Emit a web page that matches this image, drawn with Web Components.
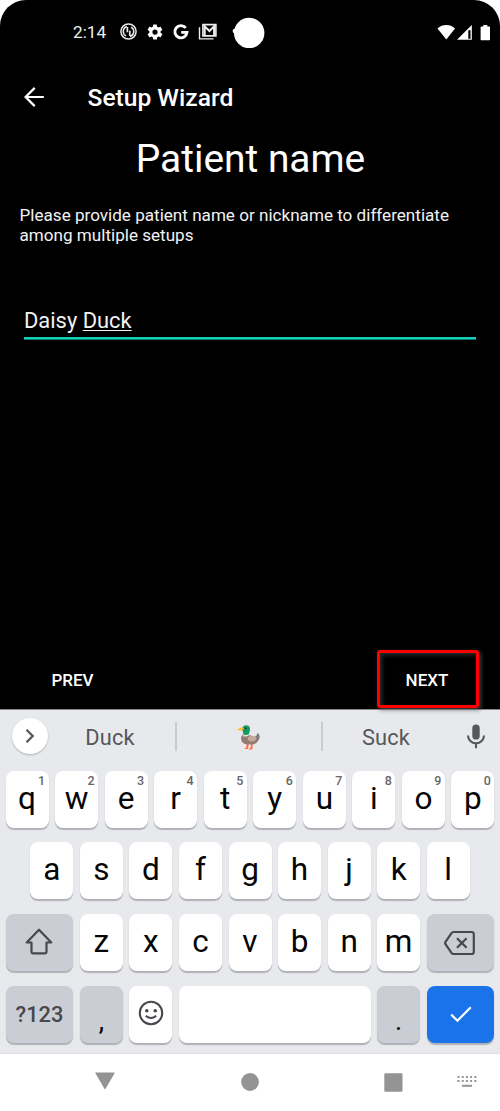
<!DOCTYPE html>
<html lang="en">
<head>
<meta charset="utf-8">
<title>Setup Wizard</title>
<style>
html,body{margin:0;background:#fff}
body{width:500px;height:1111px;overflow:hidden;font-family:Roboto,"Liberation Sans",sans-serif}
</style>
</head>
<body>
<phone-screen>
  <status-bar time="2:14"></status-bar>
  <app-bar>Setup Wizard</app-bar>
  <wizard-page>
    <span slot="title">Patient name</span>
    <span slot="hint">Please provide patient name or nickname to differentiate among multiple setups</span>
    <text-field>Daisy <u slot="composing">Duck</u></text-field>
  </wizard-page>
  <wizard-footer>
    <wizard-button>PREV</wizard-button>
    <wizard-button marked>NEXT</wizard-button>
  </wizard-footer>
  <soft-keyboard slot="bottom"></soft-keyboard>
  <nav-bar slot="bottom"></nav-bar>
</phone-screen>
<script>
function define(name, html, setup) {
  const template = document.createElement('template');
  template.innerHTML = html;
  customElements.define(name, class extends HTMLElement {
    constructor() {
      super();
      this.attachShadow({mode: 'open'}).append(template.content.cloneNode(true));
    }
    connectedCallback() { if (setup) setup(this, this.shadowRoot); }
  });
}

define('phone-screen', `<style>
:host{display:flex;flex-direction:column;width:500px;height:1111px}
.app{height:709px;background:#000;color:#fff;border-radius:26px 26px 0 0;display:flex;flex-direction:column;flex:none;position:relative;z-index:1}
</style><div class="app"><slot></slot></div><slot name="bottom"></slot>`);

define('status-bar', `<style>
:host{display:flex;align-items:center;height:64px;padding:0 9px 1px 73px;box-sizing:border-box}
time{font-size:17.2px;width:46.500px;line-height:20px;color:#eee}
svg{display:block;flex:none}
.left{display:flex;align-items:center;flex:1}
.right{display:flex;align-items:center}
</style>
<div class="left"><time></time>
<svg width="17" height="17" viewBox="0 0 17 17" fill="none" stroke="#e8e8e8" style="margin-right:9.500px"><circle cx="8.5" cy="8.5" r="7.6" stroke-width="1.5"/><path d="M7 3.600a5 5 0 0 0-1 9.300M10 13.400a5 5 0 0 0 1-9.300" stroke-width="1.500"/><path d="M7.400 4v5.200M9.800 7.800V13" stroke-width="1.700"/></svg>
<svg width="18" height="18" viewBox="0 0 24 24" fill="#fff" style="margin-right:8px"><path fill-rule="evenodd" d="M19.400 13c0-.3.1-.7.1-1s0-.7-.1-1l2.100-1.700c.2-.1.2-.4.1-.6l-2-3.500c-.1-.2-.4-.3-.6-.2l-2.500 1c-.5-.4-1.100-.7-1.700-1l-.4-2.600A.5.5 0 0 0 14 2h-4c-.2 0-.5.2-.5.4L9.100 5c-.6.3-1.200.6-1.700 1L4.900 5c-.2-.1-.5 0-.6.2l-2 3.500c-.1.2-.1.5.1.6L4.500 11c0 .3-.1.700-.1 1s0 .7.1 1l-2.100 1.700c-.2.1-.2.4-.1.6l2 3.500c.1.2.4.3.6.2l2.500-1c.5.4 1.100.7 1.700 1l.4 2.600c0 .2.2.4.5.4h4c.2 0 .5-.2.5-.4l.4-2.600c.6-.3 1.200-.6 1.700-1l2.500 1c.2.1.5 0 .6-.2l2-3.500c.1-.2.1-.5-.1-.6zM12 15.500a3.500 3.500 0 1 1 0-7 3.500 3.500 0 0 1 0 7z"/></svg>
<svg width="18" height="18" viewBox="0 0 18 18" fill="none" stroke="#fff" stroke-width="2.900" style="margin-right:8px"><path d="M13.700 4.900A6.100 6.100 0 1 0 15 9.400H9.200"/></svg>
<svg width="19" height="18" viewBox="0 0 19 18" fill="none" stroke="#eee" style="margin-right:15px"><path d="M1.500 4.200V15.900H15.500" stroke-width="1.400"/><path d="M4.900 1.600h13v11.300h-13z" stroke-width="1.600"/><path d="M6.700 12.500V3.300l4.700 4.700 4.700-4.700v9.200" stroke-width="2"/></svg>
<svg width="33" height="32" viewBox="0 0 33 32" fill="#fff"><circle cx="17.200" cy="17" r="15.200"/><circle cx="2.800" cy="15" r="2.200"/></svg>
</div>
<div class="right">
<svg width="57" height="20" viewBox="0 0 57 20" fill="#fff"><path d="M3.500 6.500a13 13 0 0 1 17.500 0L12.300 17.500z"/><path d="M23 17.800L37.800 3v14.800z" fill="#fff"/><path d="M34.300 8.200h2.200v8.600h-2.200z" fill="#000"/><path d="M47.300 4.500h2V3h4v1.500h2q.7 0 .7.7v12.400q0 .7-.7.7h-8q-.7 0-.7-.7V5.200q0-.7.7-.7z"/></svg>
</div>`, (el, root) => { root.querySelector('time').textContent = el.getAttribute('time'); });

define('app-bar', `<style>
:host{display:flex;align-items:center;height:66px;padding-left:24px;font-size:24.600px;font-weight:500;line-height:28px;padding-top:2px;box-sizing:border-box}
svg{margin:-2px 42.500px 0 0;flex:none}
</style><svg width="21" height="20" viewBox="0 0 21 20" fill="none" stroke="#fff" stroke-width="2.200"><path d="M19.800 10H2M10.700 .9L1.600 10l9.100 9.100"/></svg><div><slot></slot></div>`);

define('wizard-page', `<style>
:host{display:flex;flex-direction:column;flex:1}
.title{font-size:38.900px;line-height:46px;text-align:center;margin-top:6px;padding-left:1px}
.hint{font-size:17.100px;line-height:20px;margin:23px 20px 0 19.500px;color:#f2f2f2}
.field{margin:62px 24px 0}
</style><div class="title"><slot name="title"></slot></div><div class="hint"><slot name="hint"></slot></div><div class="field"><slot></slot></div>`);

define('text-field', `<style>
:host{display:block;font-size:21.900px;line-height:28px;color:#f2f2f2;border-bottom:2px solid #12cdb8;box-shadow:0 1px 0 #087f72;padding-bottom:2px;white-space:pre}
::slotted(u){text-decoration-thickness:1px;text-underline-offset:2px}
</style><slot></slot><slot name="composing"></slot>`);

define('wizard-footer', `<style>
:host{display:flex;justify-content:space-between;align-items:center;height:60px;padding:0 21px 0 21.500px}
</style><slot></slot>`);

define('wizard-button', `<style>
:host{display:flex;align-items:center;justify-content:center;box-sizing:border-box;width:102px;height:58px;font-size:17px;font-weight:500;padding-top:2px}
:host([marked]){border:3px solid #f00;padding:2px 2px 0 0;border-radius:3px;box-shadow:2px 2px 4px rgba(90,90,90,.7),inset 2px 2px 4px rgba(90,90,90,.5)}
</style><slot></slot>`);

define('key-cap', `<style>
:host{display:flex;position:relative;align-items:center;justify-content:center;box-sizing:border-box;width:43px;height:57px;flex:none;border-radius:8px;background:#fff;box-shadow:0 1.200px 1px rgba(0,0,0,.24);color:#050505;font-size:31.500px;line-height:38px;padding-bottom:1.200px}
:host([wide]){width:67.800px}
:host([space]){width:auto;flex:1}
:host([tone=gray]){background:#cbcdd5}
:host([tone=blue]){background:#1a73e8}
:host([label]){font-size:21.800px;font-weight:500;color:#46484c;padding:1px 0 0}
:host([low]){padding-top:14px;padding-bottom:0;font-size:27px}
sup{position:absolute;top:2px;right:3.500px;font-size:12.500px;line-height:15px;font-weight:500;color:#666}
sup:empty{display:none}
</style><slot></slot><sup></sup>`, (el, root) => { root.querySelector('sup').textContent = el.getAttribute('alt') || ''; });

define('key-row', `<style>:host{display:flex;justify-content:center;gap:6.550px;height:57px;padding:0 5.600px}</style><slot></slot>`);

define('suggestion-strip', `<style>
:host{display:grid;grid-template-columns:48px 127px 1px 145px 1px 1fr 37px;align-items:center;height:54px;color:#55575b;font-size:21.800px;letter-spacing:.2px}
.more{width:36px;height:36px;border-radius:50%;background:#fff;box-shadow:0 1px 2px rgba(0,0,0,.25);display:flex;align-items:center;justify-content:center;margin-left:12px;margin-top:-2px}
.word{text-align:center}
i{height:29px;background:#c9cbd0;width:1.500px;margin-top:-2px}
svg{display:block}
.duck{margin:auto}
</style>
<div class="more"><svg width="12" height="16" viewBox="0 0 12 16" fill="none" stroke="#55575b" stroke-width="2.300"><path d="M2.500 1.800L8.700 8l-6.200 6.200"/></svg></div>
<div class="word" style="padding-right:3px">Duck</div><i></i>
<div><svg class="duck" width="24" height="27" viewBox="0 0 24 27">
<path d="M9.500 20l-.3 3.500-2 1.500h4l.4-5zM14 20l-.2 3-2 2.500h3.600l.3-5.500z" fill="#ff7043"/>
<path d="M18 12.500q2.500-1.200 2.500-3.700 2.200 1.400 2.200 4-.2 4.500-4.700 5z" fill="#758087"/>
<path d="M7 10q-3.200 1.500-2.900 5.200.4 5 6.900 5.200h3.500q7-.2 7-7-2.500 1-5-1.200-4.500-1.200-9.500-2.200z" fill="#967a72"/>
<path d="M10.500 13.200q4-2.200 8.500-.2 1 4.300-4 4.500-4.200 0-4.500-4.300z" fill="#c5a99d"/>
<path d="M6.300 10.500l4.800-1 .7 2.200q-3 1.200-5.700.5z" fill="#e4e8e8"/>
<path d="M6.200 2.500q2-2.100 4.700-.9 2.600 1.300 2 4.700l-1 4q-3 1.300-5.300.2L5 5z" fill="#159a62"/>
<path d="M.5 5Q3.500 4.500 5 2.700l2 2q-.6 2.200-5.500 1.700Q.4 6 .5 5z" fill="#fbc02d"/><circle cx="8.500" cy="4.300" r="1" fill="#224039"/></svg></div><i></i>
<div class="word" style="padding-right:13px">Suck</div>
<svg width="20" height="25" viewBox="0 0 20 25" fill="none" stroke="#55575b" style="margin:-2px 0 0 2.500px"><rect x="6.300" y=".6" width="7.400" height="15" rx="3.700" fill="#55575b" stroke="none"/><path d="M2 11.400a8 8 0 0 0 16 0M10 19.400V24.200" stroke-width="2.100"/></svg>`);

define('soft-keyboard', `<style>
:host{display:block;box-sizing:border-box;height:345px;background:#e8e9ed;border-top:1px solid #87888b;border-bottom:1px solid #dfe0e3}
.rows{display:flex;flex-direction:column;gap:14.600px;padding-top:6.800px}
svg{display:block}
</style>
<suggestion-strip></suggestion-strip>
<div class="rows">
<key-row><key-cap alt="1">q</key-cap><key-cap alt="2">w</key-cap><key-cap alt="3">e</key-cap><key-cap alt="4">r</key-cap><key-cap alt="5">t</key-cap><key-cap alt="6">y</key-cap><key-cap alt="7">u</key-cap><key-cap alt="8">i</key-cap><key-cap alt="9">o</key-cap><key-cap alt="0">p</key-cap></key-row>
<key-row><key-cap>a</key-cap><key-cap>s</key-cap><key-cap>d</key-cap><key-cap>f</key-cap><key-cap>g</key-cap><key-cap>h</key-cap><key-cap>j</key-cap><key-cap>k</key-cap><key-cap>l</key-cap></key-row>
<key-row><key-cap wide tone="gray"><svg width="28" height="27" viewBox="0 0 28 27" fill="none" stroke="#46484c" stroke-width="2.200" stroke-linejoin="round"><path d="M14 1.700L1.700 14.500h4.800V24q0 1.300 1.300 1.300h12.400q1.300 0 1.300-1.300v-9.500h4.800z"/></svg></key-cap><key-cap>z</key-cap><key-cap>x</key-cap><key-cap>c</key-cap><key-cap>v</key-cap><key-cap>b</key-cap><key-cap>n</key-cap><key-cap>m</key-cap><key-cap wide tone="gray"><svg width="32" height="26" viewBox="0 0 32 26" fill="none" stroke="#46484c" stroke-width="2.200" stroke-linejoin="round" style="margin:3px 1px 0 0"><path d="M9.500 2h18q2.300 0 2.300 2.300v17.400q0 2.300-2.300 2.300h-18q-1.200 0-2-1.100L1.500 14.200q-.7-1.200 0-2.400L7.500 3.100q.8-1.100 2-1.100zM13 8.200l9.600 9.600M22.600 8.200L13 17.800"/></svg></key-cap></key-row>
<key-row><key-cap wide tone="gray" label>?123</key-cap><key-cap tone="gray" low>,</key-cap><key-cap><svg width="26" height="26" viewBox="0 0 26 26" fill="none" stroke="#46484c" stroke-width="2.100"><circle cx="13" cy="13" r="11.200"/><path d="M7.800 15.700q5.200 4.600 10.400 0"/><g fill="#46484c" stroke="none"><circle cx="8.800" cy="10.700" r="1.800"/><circle cx="17.200" cy="10.700" r="1.800"/></g></svg></key-cap><key-cap space></key-cap><key-cap tone="gray" low>.</key-cap><key-cap wide tone="blue"><svg width="22" height="18" viewBox="0 0 22 18" fill="none" stroke="#fff" stroke-width="2.200" style="margin-top:1px"><path d="M1.200 9.600l6.200 6.100L20.800 2.300"/></svg></key-cap></key-row>
</div>`);

define('nav-bar', `<style>
:host{display:grid;grid-template-columns:210px 80px 145px 65px;height:57px;align-items:center}
div{display:flex;justify-content:center;align-items:center}
svg{display:block;fill:#949494}
</style>
<div><svg width="20" height="18" viewBox="0 0 20 18" style="margin-top:-3px"><path d="M.8.500h18.400q.7 0 .4.700l-9.200 15.700q-.4.700-.8 0L.4 1.200q-.3-.7.400-.7z"/></svg></div>
<div><svg width="18" height="18" viewBox="0 0 18 18" style="margin-top:-1px"><circle cx="9" cy="9" r="8.900"/></svg></div>
<div style="padding-left:62px"><svg width="19" height="19" viewBox="0 0 19 19" style="margin-top:-1px"><rect x=".3" y=".2" width="18.200" height="18.600" rx="1.200"/></svg></div>
<div><svg width="20" height="12" viewBox="0 0 20 12" style="margin:-1px 2px 0 0"><path d="M.5 1h19M.5 5h19" fill="none" stroke="#949494" stroke-width="2" stroke-dasharray="2 2.200"/><path d="M5 8.800h10v2H5z"/></svg></div>`);
</script>
</body>
</html>
